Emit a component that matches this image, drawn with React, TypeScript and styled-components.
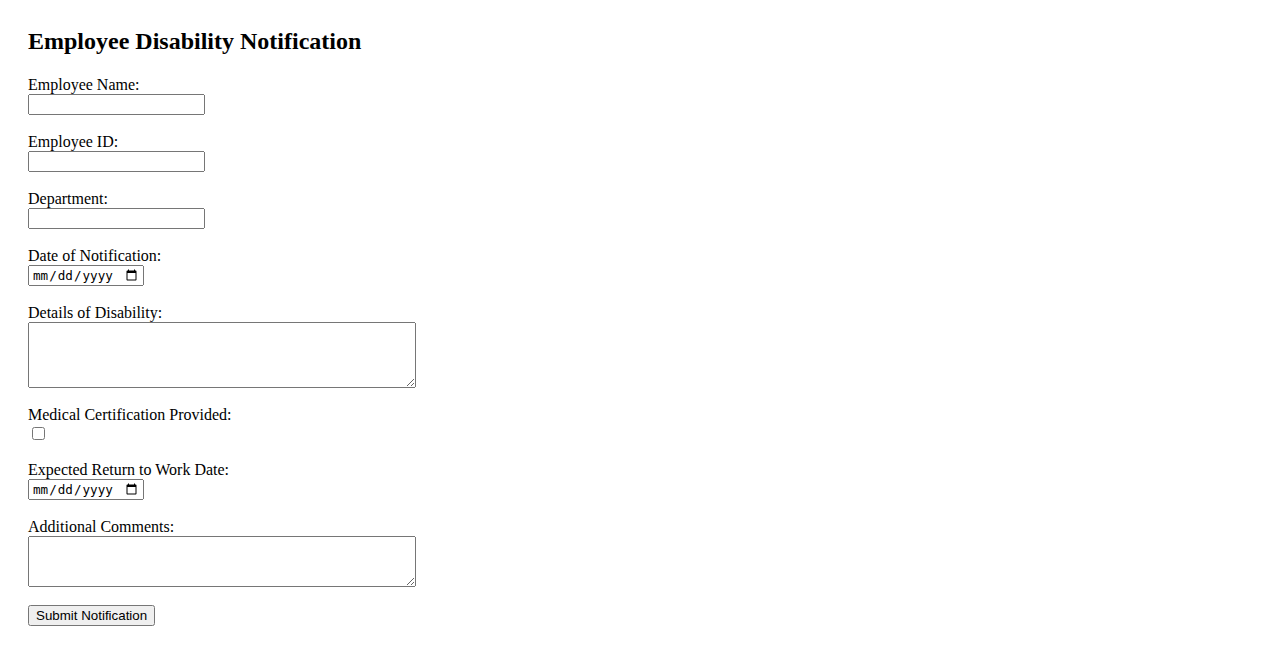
import React from "react";
import styled, { createGlobalStyle } from "styled-components";

const GlobalStyle = createGlobalStyle`
  body {
    margin: 0;
    background: #ffffff;
    color: #000000;
    font-family: "Liberation Serif", "Times New Roman", serif;
    font-size: 16px;
  }
`;

const Page = styled.div`
  padding: 28px 28px 20px 28px;
`;

const Title = styled.h2`
  margin: 0 0 19.92px 0;
  font-size: 24px;
  line-height: 27.6px;
  font-weight: bold;
`;

const Form = styled.form`
  display: flex;
  flex-direction: column;
  align-items: flex-start;
`;

const Field = styled.div`
  display: flex;
  flex-direction: column;
  align-items: flex-start;
  margin-bottom: 17.66px;
`;

const FieldLabel = styled.label`
  display: block;
  font-size: 16px;
  line-height: 18.4px;
`;

const TextInput = styled.input`
  box-sizing: border-box;
  width: 177px;
  height: 21px;
  margin: 0;
  font-family: "Liberation Sans", Arial, sans-serif;
  font-size: 13.33px;
`;

const DateInput = styled.input`
  box-sizing: border-box;
  width: 116px;
  height: 21px;
  margin: 0;
  padding: 1px 2px;
  font-family: "DejaVu Sans Mono", "Liberation Mono", monospace;
  font-size: 12.6px;
`;

const TextArea = styled.textarea<{ $height: number }>`
  box-sizing: border-box;
  width: 388px;
  height: ${(p) => p.$height}px;
  margin: 0;
  font-family: "Liberation Mono", monospace;
  font-size: 13.33px;
`;

const Checkbox = styled.input`
  width: 13px;
  height: 13px;
  margin: 3px 3px 3px 4px;
`;

const SubmitButton = styled.button`
  box-sizing: border-box;
  height: 21px;
  padding: 1px 6px;
  font-family: "Liberation Sans", Arial, sans-serif;
  font-size: 13.33px;
`;

const App = () => {
  return (
    <>
      <GlobalStyle />
      <Page>
        <Title>Employee Disability Notification</Title>
        <Form onSubmit={(e) => e.preventDefault()}>
          <Field>
            <FieldLabel htmlFor="name">Employee Name:</FieldLabel>
            <TextInput id="name" type="text" />
          </Field>
          <Field>
            <FieldLabel htmlFor="empid">Employee ID:</FieldLabel>
            <TextInput id="empid" type="text" />
          </Field>
          <Field>
            <FieldLabel htmlFor="dept">Department:</FieldLabel>
            <TextInput id="dept" type="text" />
          </Field>
          <Field>
            <FieldLabel htmlFor="notified">Date of Notification:</FieldLabel>
            <DateInput id="notified" type="date" />
          </Field>
          <Field>
            <FieldLabel htmlFor="details">Details of Disability:</FieldLabel>
            <TextArea id="details" $height={66} />
          </Field>
          <Field>
            <FieldLabel htmlFor="cert">Medical Certification Provided:</FieldLabel>
            <Checkbox id="cert" type="checkbox" />
          </Field>
          <Field>
            <FieldLabel htmlFor="return">Expected Return to Work Date:</FieldLabel>
            <DateInput id="return" type="date" />
          </Field>
          <Field>
            <FieldLabel htmlFor="comments">Additional Comments:</FieldLabel>
            <TextArea id="comments" $height={51} />
          </Field>
          <SubmitButton type="submit">Submit Notification</SubmitButton>
        </Form>
      </Page>
    </>
  );
};

export default App;
